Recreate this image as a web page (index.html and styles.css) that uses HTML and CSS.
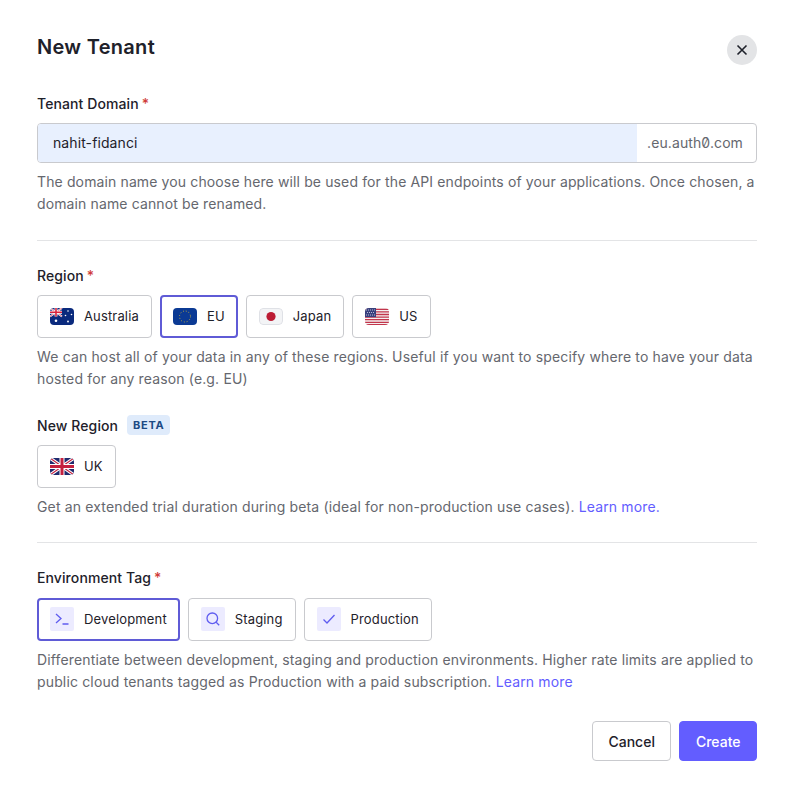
FILE: index.html
```html
<!DOCTYPE html>
<html lang="en">
<head>
    <meta charset="UTF-8">
    <meta name="viewport" content="width=device-width, initial-scale=1.0">
    <title>New Tenant</title>
    <link rel="stylesheet" href="styles.css">
</head>
<body>
    <div class="modal">
        <header class="modal-header">
            <h1>New Tenant</h1>
            <button class="close-btn" aria-label="Close">
                <svg width="12" height="12" viewBox="0 0 12 12"><path d="M1.5 1.5l9 9M10.5 1.5l-9 9" stroke="#1e212a" stroke-width="1.6" fill="none"/></svg>
            </button>
        </header>

        <!-- Domain -->
        <section class="field field-domain">
            <label class="label">Tenant Domain<span class="req">*</span></label>
            <div class="domain-input">
                <span class="domain-value">nahit-fidanci</span>
                <span class="domain-suffix">.eu.auth0.com</span>
            </div>
            <p class="help">The domain name you choose here will be used for the API endpoints of your applications. Once chosen, a domain name cannot be renamed.</p>
        </section>

        <hr class="divider">

        <!-- Region -->
        <section class="field">
            <label class="label">Region<span class="req">*</span></label>
            <div class="options">
                <button class="option">
                    <svg class="flag" viewBox="0 0 24 17">
                        <rect width="24" height="17" fill="#0a2a7d"/>
                        <path d="M0 0l12 8.5M12 0L0 8.5" stroke="#fff" stroke-width="1.8"/>
                        <path d="M0 0l12 8.5M12 0L0 8.5" stroke="#d8213b" stroke-width=".6"/>
                        <path d="M6 0v8.5M0 4.25h12" stroke="#fff" stroke-width="2.8"/>
                        <path d="M6 0v8.5M0 4.25h12" stroke="#d8213b" stroke-width="1.6"/>
                        <circle cx="6" cy="12.8" r="1.3" fill="#fff"/>
                        <circle cx="18" cy="3" r=".8" fill="#fff"/>
                        <circle cx="21.5" cy="6.5" r=".8" fill="#fff"/>
                        <circle cx="15.5" cy="7.5" r=".8" fill="#fff"/>
                        <circle cx="18" cy="13.5" r=".9" fill="#fff"/>
                    </svg>
                    Australia
                </button>
                <button class="option selected">
                    <svg class="flag" viewBox="0 0 24 17">
                        <rect width="24" height="17" fill="#0b3a94"/>
                        <circle cx="12" cy="8.5" r="5.5" fill="none" stroke="#c9b23a" stroke-width="1" stroke-dasharray=".9 2"/>
                    </svg>
                    EU
                </button>
                <button class="option">
                    <svg class="flag" viewBox="0 0 24 17">
                        <rect x=".5" y=".5" width="23" height="16" rx="3.5" fill="#f3f4f6" stroke="#dfe1e6"/>
                        <circle cx="12" cy="8.5" r="4.6" fill="#bc1c34"/>
                    </svg>
                    Japan
                </button>
                <button class="option">
                    <svg class="flag" viewBox="0 0 24 17">
                        <rect width="24" height="17" fill="#f4f0f0"/>
                        <path d="M0 1.3h24M0 3.9h24M0 6.5h24M0 9.1h24M0 11.7h24M0 14.3h24M0 16.6h24" stroke="#c2354c" stroke-width="1.3"/>
                        <rect width="11" height="9.1" fill="#38407e"/>
                        <path d="M1 2h9M2 4.5h8M1 7h9" stroke="#c9cce0" stroke-width=".9" stroke-dasharray="1 1"/>
                    </svg>
                    US
                </button>
            </div>
            <p class="help help-wide">We can host all of your data in any of these regions. Useful if you want to specify where to have your data hosted for any reason (e.g. EU)</p>
        </section>

        <section class="field field-new-region">
            <label class="label">New Region<span class="badge">BETA</span></label>
            <div class="options">
                <button class="option">
                    <svg class="flag" viewBox="0 0 24 17">
                        <rect width="24" height="17" fill="#1f2a6e"/>
                        <path d="M0 0l24 17M24 0L0 17" stroke="#fff" stroke-width="3.2"/>
                        <path d="M0 0l24 17M24 0L0 17" stroke="#c4203f" stroke-width="1.1"/>
                        <path d="M12 0v17M0 8.5h24" stroke="#fff" stroke-width="5"/>
                        <path d="M12 0v17M0 8.5h24" stroke="#c4203f" stroke-width="3"/>
                    </svg>
                    UK
                </button>
            </div>
            <p class="help help-wide">Get an extended trial duration during beta (ideal for non-production use cases). <a href="#">Learn more.</a></p>
        </section>

        <hr class="divider divider-env">

        <!-- Environment -->
        <section class="field field-env">
            <label class="label">Environment Tag<span class="req">*</span></label>
            <div class="options">
                <button class="option selected">
                    <span class="env-icon">
                        <svg width="16" height="16" viewBox="0 0 16 16"><path d="M2 3l5 4.5L2 12M8.5 13h6" stroke="#5f5cf0" stroke-width="1.3" fill="none"/></svg>
                    </span>
                    Development
                </button>
                <button class="option">
                    <span class="env-icon">
                        <svg width="16" height="16" viewBox="0 0 16 16"><circle cx="7.3" cy="7.3" r="5.3" stroke="#5f5cf0" stroke-width="1.3" fill="none"/><path d="M11.2 11.2l3 3" stroke="#5f5cf0" stroke-width="1.3"/></svg>
                    </span>
                    Staging
                </button>
                <button class="option">
                    <span class="env-icon">
                        <svg width="16" height="16" viewBox="0 0 16 16"><path d="M2.5 8.5l3.5 3.5 7.5-8" stroke="#5f5cf0" stroke-width="1.3" fill="none"/></svg>
                    </span>
                    Production
                </button>
            </div>
            <p class="help help-wide">Differentiate between development, staging and production environments. Higher rate limits are applied to public cloud tenants tagged as Production with a paid subscription. <a href="#">Learn more</a></p>
        </section>

        <footer class="modal-footer">
            <button class="btn btn-cancel">Cancel</button>
            <button class="btn btn-create">Create</button>
        </footer>
    </div>
</body>
</html>
```

FILE: styles.css
```css
:root {
    --primary-color: #635dff;
    --selected-color: #5f5bd6;
    --text-color: #1e212a;
    --muted-color: #65676e;
    --border-color: #c9cace;
    --divider-color: #e3e4e6;
}

body {
    font-family: 'Inter', sans-serif;
    margin: 0;
    padding: 0;
    background-color: #fff;
    color: var(--text-color);
}

.modal {
    padding: 35px 34px 33px 37px;
}

.modal-header {
    display: flex;
    justify-content: space-between;
    align-items: flex-start;
    height: 60px;
}

.modal-header h1 {
    margin: 0;
    font-size: 20px;
    line-height: 24px;
    font-weight: 600;
    letter-spacing: 0.3px;
}

.close-btn {
    width: 30px;
    height: 30px;
    border: none;
    border-radius: 50%;
    padding: 0;
    background-color: #e3e4e6;
    display: flex;
    align-items: center;
    justify-content: center;
}

.label {
    display: flex;
    align-items: center;
    height: 18px;
    margin-top: -1px;
    margin-bottom: 11px;
    font-size: 14px;
    font-weight: 500;
    letter-spacing: 0.1px;
}

.req {
    color: #d03c38;
    margin-left: 3px;
}

.badge {
    margin-left: 9px;
    padding: 0 6px;
    height: 20px;
    line-height: 20px;
    border-radius: 4px;
    background-color: #dfebfb;
    color: #1c4a84;
    font-size: 11px;
    font-weight: 700;
    letter-spacing: 0.7px;
}

.domain-input {
    display: flex;
    height: 40px;
    box-sizing: border-box;
    border: 1px solid var(--border-color);
    border-radius: 4px;
    overflow: hidden;
    font-size: 14px;
    line-height: 38px;
}

.domain-value {
    flex: 1;
    padding-left: 15px;
    background-color: #e8f0fe;
    letter-spacing: 0.1px;
}

.domain-suffix {
    padding: 0 13px 0 10px;
    color: var(--muted-color);
    font-feature-settings: "zero";
    letter-spacing: 0.1px;
}

.help {
    margin: 8px 0 0;
    font-size: 14px;
    line-height: 22px;
    letter-spacing: 0.125px;
    color: var(--muted-color);
}

.help-wide {
    letter-spacing: 0.15px;
}

.help a {
    color: var(--primary-color);
    text-decoration: none;
}

.divider {
    border: none;
    border-top: 1px solid var(--divider-color);
    margin: 25px 0 26px;
}

.divider-env {
    margin: 24px 0 26px;
}

.options {
    display: flex;
    gap: 8px;
}

.field-env .label {
    margin-bottom: 12px;
}

.option {
    display: flex;
    align-items: center;
    gap: 10px;
    height: 43px;
    box-sizing: border-box;
    padding: 0 12px 1px;
    background-color: #fff;
    border: 1px solid var(--border-color);
    border-radius: 4px;
    font-family: inherit;
    font-size: 13px;
    color: var(--text-color);
    letter-spacing: 0.15px;
}

.option.selected {
    border: 2px solid var(--selected-color);
    padding: 0 11px 1px;
}

.flag {
    width: 24px;
    height: 17px;
    border-radius: 4px;
}

.env-icon {
    width: 24px;
    height: 24px;
    background-color: #ecebff;
    border-radius: 2px;
    display: flex;
    align-items: center;
    justify-content: center;
}

.field-new-region {
    margin-top: 27px;
}

.modal-footer {
    display: flex;
    justify-content: flex-end;
    gap: 8px;
    margin-top: 28px;
}

.btn {
    height: 40px;
    box-sizing: border-box;
    padding: 0 15.5px;
    border-radius: 4px;
    font-family: inherit;
    font-size: 14px;
    font-weight: 500;
}

.btn-cancel {
    background-color: #fff;
    border: 1px solid var(--border-color);
    color: var(--text-color);
}

.btn-create {
    background-color: var(--primary-color);
    border: 1px solid var(--primary-color);
    color: #fff;
}
```
